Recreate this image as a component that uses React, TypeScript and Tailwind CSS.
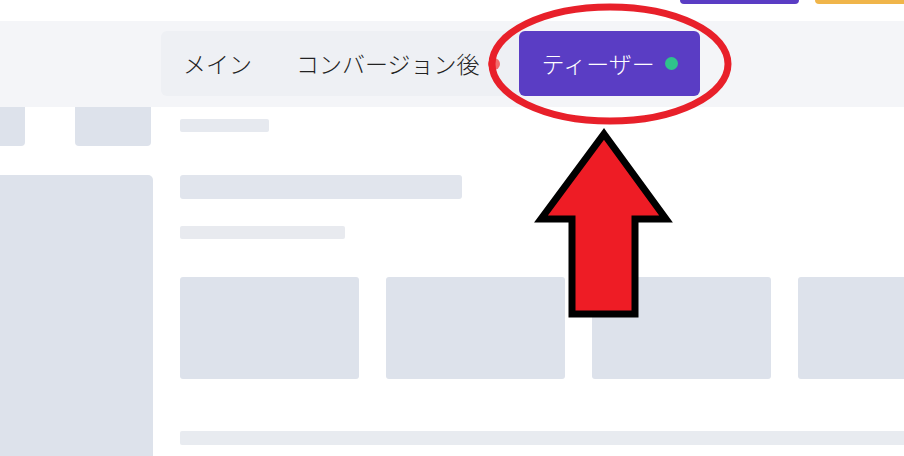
const jp = { fontFamily: '"Noto Sans CJK JP", "Noto Sans", sans-serif' };

const cards = [0, 1, 2, 3];

export default function App() {
  return (
    <div className="relative h-[456px] w-[904px] overflow-hidden bg-white" style={jp}>
      {/* top strip with buttons cut off at the top edge */}
      <div className="flex h-[21px] items-start">
        <div className="ml-[680px] h-[4px] w-[119px] rounded-b-[6px] bg-[#5a3dc4]" />
        <div className="ml-[16px] h-[4px] flex-1 rounded-bl-[6px] bg-[#f0b54a]" />
      </div>

      {/* tab band */}
      <div className="h-[86px] bg-[#f4f5f8] pl-[161px] pt-[10px]">
        <div className="flex h-[65px] w-[539px] items-center rounded-md bg-[#eef0f4] text-[23px] font-light leading-none text-[#222]">
          <div className="px-[22px]">メイン</div>
          <div className="flex items-center pl-[22px] pr-[19px]">
            <span>コンバージョン後</span>
            <span className="ml-[8px] h-[12px] w-[12px] rounded-full bg-[#f26d6d]" />
          </div>
          <div className="flex h-[65px] flex-1 items-center rounded-md bg-[#5a3dc4] pl-[23px] text-white">
            <span>ティーザー</span>
            <span className="ml-[10px] h-[13px] w-[13px] rounded-full bg-[#2fc28c]" />
          </div>
        </div>
      </div>

      {/* page skeleton */}
      <div className="flex">
        <div className="w-[153px] shrink-0">
          <div className="flex h-[39px]">
            <div className="w-[25px] rounded-br-[4px] bg-[#dde2eb]" />
            <div className="ml-[50px] w-[76px] rounded-b-[4px] bg-[#dde2eb]" />
          </div>
          <div className="mt-[29px] h-[290px] rounded-tr-[5px] bg-[#dde2eb]" />
        </div>
        <div className="ml-[27px] flex-1 pt-[12px]">
          <div className="h-[13px] w-[89px] rounded-[2px] bg-[#e6e9ef]" />
          <div className="mt-[43px] h-[24px] w-[282px] rounded-[3px] bg-[#e1e5ed]" />
          <div className="mt-[27px] h-[13px] w-[165px] rounded-[2px] bg-[#e8eaef]" />
          <div className="mt-[38px] flex gap-[27px]">
            {cards.map((c) => (
              <div key={c} className="h-[102px] w-[179px] shrink-0 rounded-[3px] bg-[#dde2eb]" />
            ))}
          </div>
          <div className="mt-[52px] h-[14px] rounded-l-[2px] bg-[#e8ebf0]" />
        </div>
      </div>

      {/* annotation overlay */}
      <svg className="pointer-events-none absolute left-0 top-0" width="904" height="456" viewBox="0 0 904 456">
        <ellipse cx="610" cy="64" rx="118" ry="57" fill="none" stroke="#e8202a" strokeWidth="7" />
        <polygon
          points="604,134 666,219 635,219 635,314 572,314 572,219 541,219"
          fill="#ee1c25"
          stroke="#000"
          strokeWidth="7"
          strokeLinejoin="miter"
          strokeMiterlimit="10"
        />
      </svg>
    </div>
  );
}
